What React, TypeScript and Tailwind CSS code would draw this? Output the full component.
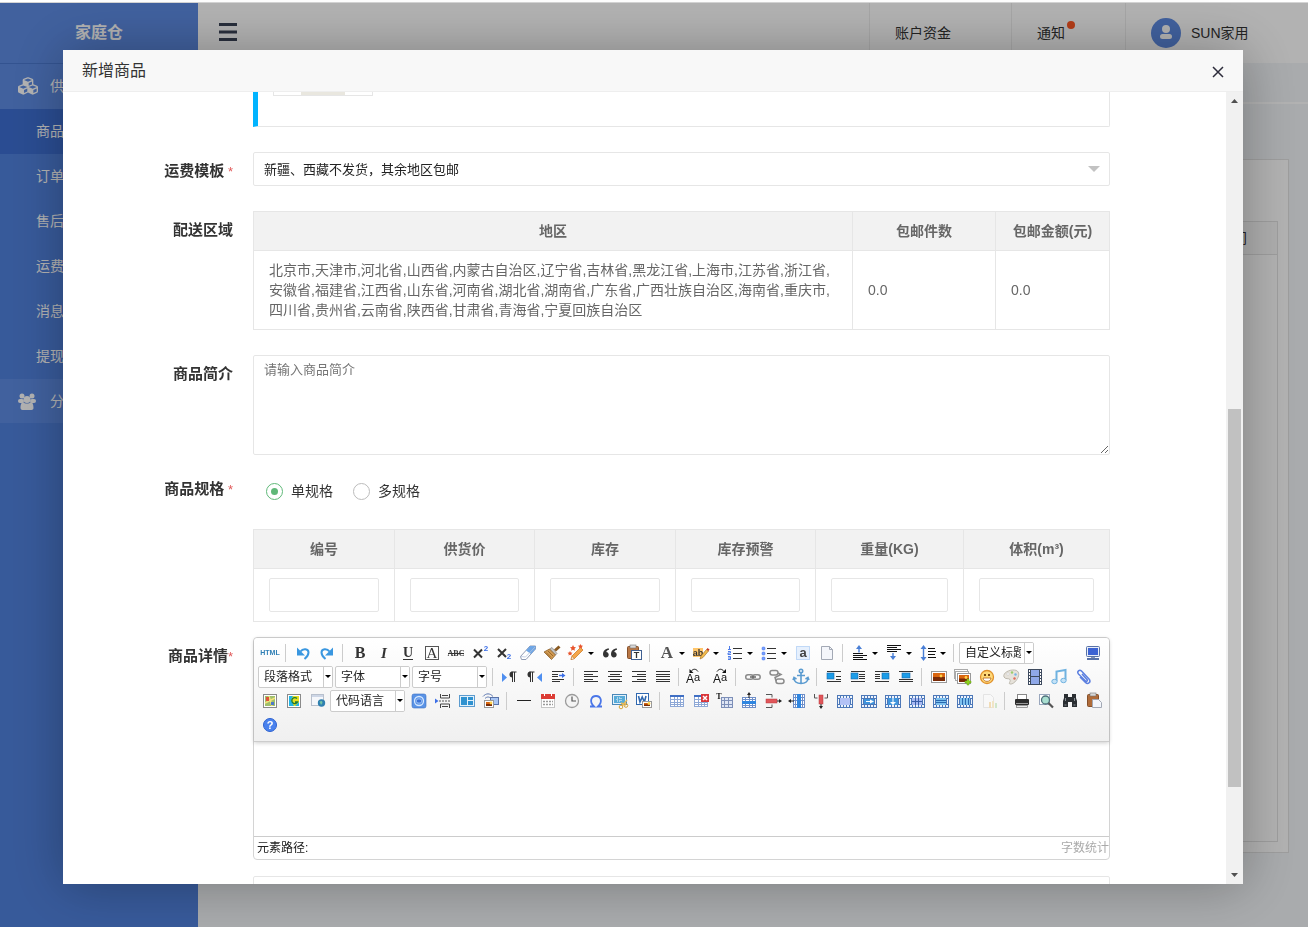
import { useState } from 'react';
import type { ReactNode } from 'react';
import { FaCubes } from 'react-icons/fa';

const INK = '#333333';
const BLUE = '#4a7fd6';

/* ---------- icon helpers (all toolbar icons live on a 20x20 grid) ---------- */

function Lines({ rows, color = INK }: { rows: number[][]; color?: string }) {
  return (
    <>
      {rows.map(([x, y, w], i) => (
        <rect key={i} x={x} y={y} width={w} height="1" fill={color} />
      ))}
    </>
  );
}

function Grid({
  x = 3,
  y = 4,
  w = 14,
  h = 12,
  cols = [] as number[],
  rows = [] as number[],
  fill = '#ffffff',
  stroke = '#6f8fc9',
}) {
  return (
    <>
      <rect x={x + 0.5} y={y + 0.5} width={w - 1} height={h - 1} fill={fill} stroke={stroke} />
      {cols.map((c) => (
        <rect key={'c' + c} x={c} y={y} width="1" height={h} fill={stroke} />
      ))}
      {rows.map((r) => (
        <rect key={'r' + r} x={x} y={r} width={w} height="1" fill={stroke} />
      ))}
    </>
  );
}

function Glyph({
  x = 10,
  y = 15,
  size,
  children,
  fill = INK,
  serif,
  bold,
  italic,
}: {
  x?: number;
  y?: number;
  size: number;
  children: string;
  fill?: string;
  serif?: boolean;
  bold?: boolean;
  italic?: boolean;
}) {
  return (
    <text
      x={x}
      y={y}
      fontSize={size}
      fill={fill}
      textAnchor="middle"
      fontFamily={serif ? 'Liberation Serif, serif' : 'Liberation Sans, sans-serif'}
      fontWeight={bold ? 700 : 400}
      fontStyle={italic ? 'italic' : 'normal'}
    >
      {children}
    </text>
  );
}

function Photo({ x, y, w = 14, h = 11 }: { x: number; y: number; w?: number; h?: number }) {
  return (
    <>
      <rect x={x + 0.5} y={y + 0.5} width={w - 1} height={h - 1} fill="#fff" stroke="#999" />
      <rect x={x + 2} y={y + 2} width={w - 4} height={h - 4} fill="#7a2b06" />
      <rect x={x + 2} y={y + 2} width={w - 4} height={(h - 4) / 2} fill="#d9650f" />
      <circle cx={x + w / 2 + 2} cy={y + h / 2 - 1} r="1.4" fill="#ffd24a" />
    </>
  );
}

const star = '#e8552d';
const omegaBlue = '#3a6ee8';

const filmFrame = (
  <>
    <rect x="2" y="4" width="16" height="13" fill="#4d78b8" />
    {[3, 6, 9, 12, 15].map((v) => (
      <g key={v} fill="#eef4fc">
        <rect x={v} y="5" width="2" height="2" />
        <rect x={v} y="14" width="2" height="2" />
      </g>
    ))}
    <rect x="3" y="8" width="1" height="5" fill="#eef4fc" />
    <rect x="16" y="8" width="1" height="5" fill="#eef4fc" />
  </>
);

const icons: Record<string, ReactNode> = {
  html: <Glyph size={7} y={12} fill="#2f7fb5" bold>HTML</Glyph>,
  undo: (
    <>
      <path d="M4 4.500v8h8z" fill="#3a97e0" />
      <path d="M7.500 8.500c2.500-3.500 8-3 8 1 0 2.500-1.500 4.500-4 6.500" fill="none" stroke="#3a97e0" strokeWidth="2" />
    </>
  ),
  redo: (
    <>
      <path d="M16 4.500v8H8z" fill="#3a97e0" />
      <path d="M12.500 8.500c-2.500-3.500-8-3-8 1 0 2.500 1.500 4.500 4 6.500" fill="none" stroke="#3a97e0" strokeWidth="2" />
    </>
  ),
  bold: <Glyph size={16} serif bold>B</Glyph>,
  italic: <Glyph size={15} serif bold italic>I</Glyph>,
  underline: (
    <>
      <Glyph size={14} y={14} serif bold>U</Glyph>
      <Lines rows={[[5, 16, 10]]} />
    </>
  ),
  fontborder: (
    <>
      <rect x="3.5" y="3.5" width="13" height="13" fill="none" stroke="#555" />
      <Glyph size={15} y={15} serif>A</Glyph>
    </>
  ),
  strikethrough: (
    <>
      <Glyph size={8} y={13} serif bold>ABC</Glyph>
      <Lines rows={[[2, 10, 16]]} />
    </>
  ),
  superscript: (
    <>
      <path d="M4 6.500l8 8M12 6.500l-8 8" stroke={INK} strokeWidth="2" />
      <Glyph size={8} x={16} y={8} fill={omegaBlue} bold>2</Glyph>
    </>
  ),
  subscript: (
    <>
      <path d="M4 6l8 8M12 6l-8 8" stroke={INK} strokeWidth="2" />
      <Glyph size={8} x={15} y={16} fill={omegaBlue} bold>2</Glyph>
    </>
  ),
  removeformat: (
    <>
      <path d="M2.500 13.500l9.500-10.500h5.500v3l-9.500 10.500H3.500z" fill="#fff" stroke="#8f9bb3" />
      <path d="M12 3h5.500v3l-4.500 5-5-3.500z" fill="#6ea6e6" />
      <path d="M3 13.500l4.500.5 9.500-10" fill="none" stroke="#b5c3dc" strokeWidth=".8" />
    </>
  ),
  formatmatch: (
    <>
      <path d="M17.500 3.500l-4.500 4" stroke="#8a5a22" strokeWidth="3" />
      <path d="M10 4.500l5 6-1.500 1.500-6-6z" fill="#c4c4c4" stroke="#777" strokeWidth=".6" />
      <path d="M7.500 6l6 6-4 4.500-7.500-7.500z" fill="#d09a52" stroke="#80521b" strokeWidth=".7" />
      <path d="M4 9.500l5 5M6 8l5 5" stroke="#8d5c20" strokeWidth=".8" />
    </>
  ),
  autotypeset: (
    <>
      <path d="M5 16.500l1-3.500 8.500-8.500L17 7l-8.500 8.500z" fill="#f5a64a" stroke="#c5761d" strokeWidth=".7" />
      <path d="M5 16.500l1-3 2.200 2.200z" fill="#fff" stroke="#b5651b" strokeWidth=".5" />
      <path d="M7 2l1 2 2 .3-1.500 1.400.4 2L7 6.700l-1.900 1 .4-2L4 4.300 6 4zM14.500 1l.8 1.500 1.700.2-1.200 1.200.3 1.600-1.600-.8-1.500.8.3-1.600L12 2.700l1.700-.2zM4 8l.8 1.500 1.700.2-1.200 1.200.3 1.600L4 11.700l-1.500.8.3-1.600-1.300-1.200 1.700-.2z" fill={star} />
    </>
  ),
  blockquote: (
    <path d="M9 5.500C5 5.500 3 8 3 11.300c0 2 1.200 3.200 2.900 3.200 1.600 0 2.800-1.100 2.800-2.700 0-1.500-1.100-2.600-2.500-2.700C6.700 7.500 7.500 7 9 6.700zM17 5.500c-4 0-6 2.500-6 5.800 0 2 1.200 3.200 2.900 3.200 1.600 0 2.800-1.100 2.800-2.700 0-1.500-1.100-2.600-2.500-2.700.5-1.600 1.300-2.100 2.800-2.400z" fill={INK} />
  ),
  pasteplain: (
    <>
      <rect x="3.5" y="3.5" width="11" height="12" rx="1" fill="#b97745" stroke="#85502a" />
      <rect x="6" y="2" width="6" height="3" fill="#d9d9d9" stroke="#777" strokeWidth=".6" />
      <rect x="7.5" y="7.5" width="10" height="9" fill="#fff" stroke="#3f5f92" />
      <Glyph size={9} x={12.5} y={15} bold>T</Glyph>
    </>
  ),
  forecolor: <Glyph size={17} x={10} y={15} serif bold fill="#555">A</Glyph>,
  backcolor: (
    <>
      <rect x="2" y="5" width="10" height="9" fill="#ffc66b" />
      <Glyph size={9} x={7} y={13} bold>ab</Glyph>
      <path d="M9 16l1-3 5.500-6.500 2 1.500-5.500 6.500z" fill="#f4bd4c" stroke="#a8742a" strokeWidth=".7" />
      <path d="M15.500 6.500l1-1.500 2 1.500-1 1.500z" fill="#c9341f" />
    </>
  ),
  orderedlist: (
    <>
      <Lines rows={[[8, 5, 9], [8, 10, 9], [8, 15, 9]]} />
      <path d="M4.500 3v3M3 6.500h3M3 8.500h2.500v1.500H3v1.500h3M3 13.500h2.500v3H3M3 15h2.500" fill="none" stroke={omegaBlue} strokeWidth=".9" />
    </>
  ),
  unorderedlist: (
    <>
      <Lines rows={[[8, 5, 9], [8, 10, 9], [8, 15, 9]]} />
      {[5, 10, 15].map((y) => (
        <rect key={y} x="3" y={y - 1} width="3" height="3" rx="1" fill="#7aa0ff" stroke={omegaBlue} strokeWidth=".5" />
      ))}
    </>
  ),
  selectall: (
    <>
      <rect x="3.5" y="3.5" width="13" height="13" fill="#e6f0fd" stroke="#8fbaf0" strokeDasharray="1 1" />
      <Glyph size={13} y={14} bold fill="#444">a</Glyph>
    </>
  ),
  cleardoc: (
    <>
      <path d="M4.500 3.500h8l3 3v10h-11z" fill="#f4f6fb" stroke="#a3a9b5" />
      <path d="M12.500 3.500v3h3" fill="none" stroke="#a3a9b5" />
    </>
  ),
  paraabove: (
    <>
      <path d="M9 2l3 4H9.700v3.500H8.300V6H6z" fill={BLUE} />
      <Lines rows={[[3, 10, 10], [3, 12, 14], [3, 14, 10], [3, 16, 14]]} color="#111" />
    </>
  ),
  parabelow: (
    <>
      <Lines rows={[[3, 2, 14], [3, 4, 10], [3, 6, 14], [3, 8, 10]]} color="#111" />
      <path d="M9 17l3-4H9.700v-3H8.300v3H6z" fill={BLUE} />
    </>
  ),
  lineheight: (
    <>
      <path d="M5.500 2l3 4H6.200v8h2.300l-3 4-3-4h2.300V6H2.500z" fill={BLUE} />
      <Lines rows={[[10, 5, 7], [10, 8, 8], [10, 11, 7], [10, 14, 8]]} color="#111" />
    </>
  ),
  fullscreen: (
    <>
      <rect x="3.5" y="3.5" width="13" height="10" rx="1" fill="#e8edf7" stroke="#5872a8" />
      <rect x="5" y="5" width="10" height="7" fill="#3c63d3" />
      <rect x="8" y="14" width="4" height="1" fill="#8796b5" />
      <rect x="4.5" y="15.5" width="11" height="1" fill="#fff" stroke="#5872a8" />
    </>
  ),
  ltr: (
    <>
      <path d="M2 6l5 4.500L2 15z" fill="#4f8ff0" />
      <path d="M11.500 5h5M12.500 5v10M14.500 5v10" stroke={INK} strokeWidth="1" />
      <path d="M12.500 4.500a3 3 0 000 6z" fill={INK} />
    </>
  ),
  rtl: (
    <>
      <path d="M18 6l-5 4.500 5 4.500z" fill="#4f8ff0" />
      <path d="M5.500 5h5M6.500 5v10M8.500 5v10" stroke={INK} strokeWidth="1" />
      <path d="M6.500 4.500a3 3 0 000 6z" fill={INK} />
    </>
  ),
  indent: (
    <>
      <Lines rows={[[4, 4, 12], [4, 7, 6], [4, 9, 6], [4, 12, 12], [4, 14, 8]]} />
      <path d="M11 7.700h3V6l3.500 2.500L14 11V9.300h-3z" fill={omegaBlue} />
    </>
  ),
  alignleft: <Lines rows={[[3, 4, 14], [3, 7, 9], [3, 9, 14], [3, 12, 9], [3, 14, 14]]} />,
  aligncenter: <Lines rows={[[3, 4, 14], [5, 7, 10], [3, 9, 14], [5, 12, 10], [3, 14, 14]]} />,
  alignright: <Lines rows={[[3, 4, 14], [8, 7, 9], [3, 9, 14], [8, 12, 9], [3, 14, 14]]} />,
  alignjustify: <Lines rows={[[3, 4, 14], [3, 7, 14], [3, 9, 14], [3, 12, 14], [3, 14, 14]]} />,
  touppercase: (
    <>
      <Glyph size={12} x={4} y={16} fill="#111">A</Glyph>
      <Glyph size={11} x={11} y={14} fill="#111">a</Glyph>
      <path d="M5 4.500c2-3 5-3 7 0" fill="none" stroke="#111" />
      <path d="M3.500 2v4h4z" fill="#111" />
    </>
  ),
  tolowercase: (
    <>
      <Glyph size={12} x={7} y={16} fill="#111">A</Glyph>
      <Glyph size={11} x={14} y={14} fill="#111">a</Glyph>
      <path d="M7 4.500c2-3 5-3 7 0" fill="none" stroke="#111" />
      <path d="M16 2v4h-4z" fill="#111" />
    </>
  ),
  link: (
    <>
      <rect x="2.7" y="7.7" width="7.5" height="4.6" rx="2.3" fill="none" stroke="#8b8b8b" strokeWidth="1.5" />
      <rect x="9.7" y="7.7" width="7.5" height="4.6" rx="2.3" fill="none" stroke="#8b8b8b" strokeWidth="1.5" />
      <path d="M7 10h6" stroke="#666" strokeWidth="1.5" />
    </>
  ),
  unlink: (
    <g fill="none" stroke="#8b8b8b" strokeWidth="1.5">
      <rect x="3" y="3.5" width="8" height="4.5" rx="2.2" />
      <rect x="9" y="12" width="8" height="4.5" rx="2.2" />
      <path d="M11 6l3 1.500-6 3L9 14" />
    </g>
  ),
  anchor: (
    <g fill="none" stroke="#5b9bd0" strokeWidth="1.6">
      <circle cx="10" cy="4" r="1.7" />
      <path d="M10 6v11M6 8.500h8M3 11.500c.5 3.500 3 5 7 5s6.500-1.500 7-5M2 13l1-2.500 2.500 1.500M18 13l-1-2.500-2.500 1.500" />
    </g>
  ),
  imageleft: (
    <>
      <Lines rows={[[3, 4, 14], [12, 9, 5], [12, 12, 5], [3, 14, 14]]} />
      <rect x="3" y="6" width="7" height="6" fill="#1b9ce8" stroke="#1567a8" strokeWidth=".6" />
    </>
  ),
  imagenone: (
    <>
      <Lines rows={[[3, 4, 14], [11, 7, 6], [11, 9, 6], [11, 11, 6], [3, 14, 14]]} />
      <rect x="3" y="6" width="7" height="6" fill="#1b9ce8" stroke="#1567a8" strokeWidth=".6" />
    </>
  ),
  imageright: (
    <>
      <Lines rows={[[3, 4, 14], [3, 7, 5], [3, 9, 5], [3, 11, 5], [3, 14, 14]]} />
      <rect x="10" y="6" width="7" height="6" fill="#1b9ce8" stroke="#1567a8" strokeWidth=".6" />
    </>
  ),
  imagecenter: (
    <>
      <Lines rows={[[3, 4, 14], [3, 12, 14], [3, 14, 14]]} />
      <rect x="6" y="6" width="8" height="5" fill="#1b9ce8" stroke="#1567a8" strokeWidth=".6" />
    </>
  ),
  image: <Photo x={2} y={4} w={16} h={12} />,
  multiimage: (
    <>
      <rect x="1.5" y="2.5" width="13" height="9" fill="#fff" stroke="#aaa" />
      <rect x="2.5" y="4.5" width="13" height="9" fill="#fff" stroke="#aaa" />
      <Photo x={4} y={6} w={14} h={11} />
      <path d="M14 12h2v2h2v2h-2v2h-2v-2h-2v-2h2z" fill="#8fcf1f" stroke="#6ba510" strokeWidth=".5" />
    </>
  ),
  emotion: (
    <>
      <circle cx="10" cy="10" r="6.5" fill="#ffd978" stroke="#e0902a" strokeWidth="1.3" />
      <rect x="7" y="7" width="2" height="2" fill="#7a4a12" />
      <rect x="11" y="7" width="2" height="2" fill="#7a4a12" />
      <path d="M6 11h8c-.5 4.500-7.500 4.500-8 0z" fill="#fff" stroke="#b5651b" strokeWidth=".8" />
    </>
  ),
  scrawl: (
    <>
      <path d="M3 10c-1.500-4 5-7.500 10.500-7 5 .5 5 5 3 8.500-2 3.500-5 6-7.500 5.500-2-.5 1-2.500 0-4.500-1-1.500-5 0-6-2.500z" fill="#e6e2da" stroke="#b3ada1" strokeWidth=".8" />
      <circle cx="7" cy="7" r="1.3" fill="#f7f7f7" stroke="#bbb" strokeWidth=".4" />
      <circle cx="11" cy="5.5" r="1.2" fill="#9acd6b" />
      <circle cx="14.5" cy="7.5" r="1.2" fill="#76b5e8" />
      <circle cx="13.5" cy="11.5" r="1.2" fill="#e06a5b" />
    </>
  ),
  video: (
    <>
      <rect x="3" y="2" width="14" height="16" fill="#3d4a5e" />
      <rect x="6" y="3" width="8" height="6" fill="#8fa8e8" />
      <rect x="6" y="10" width="8" height="7" fill="#8fa8e8" />
      {[3, 6, 9, 12, 15].map((y) => (
        <g key={y} fill="#fff">
          <rect x="4" y={y} width="1" height="2" />
          <rect x="15" y={y} width="1" height="2" />
        </g>
      ))}
    </>
  ),
  music: (
    <>
      <path d="M7.500 14V4.500l9-1.500v10" fill="none" stroke="#6fb2e0" strokeWidth="2" />
      <ellipse cx="5.5" cy="14.5" rx="2.7" ry="2.2" fill="#c4e2f7" stroke="#6fb2e0" />
      <ellipse cx="14.5" cy="13.5" rx="2.7" ry="2.2" fill="#c4e2f7" stroke="#6fb2e0" />
    </>
  ),
  attachment: (
    <path d="M9 7l5 5.500c1 1.200-.3 2.500-1.500 1.500L5.500 7C3.500 4.700 6.500 2 8.500 4l7.500 8c2.500 3-1 6-3.500 3.500L7 10" fill="none" stroke="#5b7fe0" strokeWidth="1.5" />
  ),
  map: (
    <>
      <rect x="3.5" y="3.5" width="13" height="13" fill="#fff" stroke="#8a8a8a" />
      <rect x="5" y="5" width="10" height="10" fill="#9fbf6b" />
      <path d="M5 12l10-5M9 5l3 10" stroke="#f3e27a" strokeWidth="1.5" />
      <rect x="6" y="6" width="3" height="4" fill="#e0523a" />
      <rect x="11" y="11" width="3" height="3" fill="#4d78c9" />
    </>
  ),
  gmap: (
    <>
      <rect x="3.5" y="3.5" width="13" height="13" fill="#fff" stroke="#8a8a8a" />
      <rect x="5" y="5" width="10" height="10" fill="#e8e01f" />
      <path d="M5 5h4L7 9l3 6H5zM11 15l4-4v4z" fill="#1fb6e8" />
      <path d="M13 7.500a3 3 0 10.5 3.500H11" fill="none" stroke="#1d7a3a" strokeWidth="1.4" />
    </>
  ),
  insertframe: (
    <>
      <rect x="3.5" y="3.5" width="12" height="11" fill="#f5f7fb" stroke="#b8c0cd" />
      <rect x="4" y="4" width="11" height="2" fill="#cdd6e6" />
      <circle cx="13.5" cy="12" r="3.7" fill="#2f7fb0" />
      <path d="M11.500 10.500l2.500-.5.500 2-1.500 2z" fill="#74c4a4" />
    </>
  ),
  webapp: (
    <>
      <rect x="3" y="3" width="14" height="14" rx="2" fill="#5a93e6" stroke="#3a6fc4" strokeWidth=".6" />
      <circle cx="10" cy="10" r="4.5" fill="none" stroke="#d6e8ff" strokeWidth="1.3" />
      <rect x="7.5" y="8" width="5" height="4" rx="1.5" fill="#3a72d6" stroke="#bcd6fb" strokeWidth=".7" />
    </>
  ),
  pagebreak: (
    <>
      <path d="M7.500 3v4h9V3M7.500 17v-4h9v4M9 4.500h6M9 15.500h6" fill="none" stroke="#444" />
      <path d="M6 10h12" stroke="#555" strokeDasharray="2 1" />
      <path d="M2 7.500l3.500 2.500L2 12.500z" fill={omegaBlue} />
    </>
  ),
  template: (
    <>
      <rect x="2.5" y="4.5" width="15" height="11" fill="#e3f1fb" stroke="#5b9bcf" />
      <rect x="4" y="6" width="6" height="8" fill="#2f92d0" />
      <rect x="11" y="6" width="5" height="3" fill="#2f92d0" />
      <rect x="11" y="10" width="5" height="4" fill="#2f92d0" />
    </>
  ),
  background: (
    <>
      <path d="M2 5.500c3-3.500 7-3.500 10 0M4 7.500c2-2 4-2 6 0" fill="none" stroke="#5b76b0" />
      <rect x="9.5" y="6.5" width="8" height="7" fill="#a9c6f5" stroke="#5872a8" />
      <Photo x={3} y={9} w={10} h={8} />
    </>
  ),
  horizontal: <Lines rows={[[3, 9, 14]]} color="#222" />,
  date: (
    <>
      <rect x="3.5" y="4.5" width="13" height="12" fill="#fff" stroke="#c5c5c5" />
      <rect x="3" y="3" width="14" height="5" fill="#dc3c35" />
      <rect x="6" y="2" width="1" height="3" fill="#fff" />
      <rect x="13" y="2" width="1" height="3" fill="#fff" />
      <path d="M5 10.500h10M5 13.500h10" stroke="#9a9a9a" strokeDasharray="2 1" strokeWidth="1.5" />
    </>
  ),
  time: (
    <>
      <circle cx="10" cy="10" r="6.5" fill="#f4f4f4" stroke="#9b9b9b" strokeWidth="1.3" />
      <path d="M10 5.500V10h4" fill="none" stroke="#555" strokeWidth="1.2" />
    </>
  ),
  spechars: <path d="M4 15.500h4c-5-4.500-3-10.500 2-10.500s7 6 2 10.500h4" fill="none" stroke="#4a76e8" strokeWidth="1.8" />,
  snapscreen: (
    <>
      <rect x="2.5" y="3.5" width="14" height="10" fill="#e4f1fb" stroke="#4a88b8" />
      <rect x="4" y="5" width="11" height="7" fill="#57abd8" />
      <path d="M7 7h4v3H7z" fill="none" stroke="#fff" strokeDasharray="1 1" />
      <path d="M17 9l-5 6M11 12l5 2" stroke="#e3b95a" strokeWidth="1.5" />
      <circle cx="11" cy="16" r="1.8" fill="none" stroke="#d5a53b" />
      <circle cx="16" cy="14.5" r="1.8" fill="none" stroke="#d5a53b" />
    </>
  ),
  wordimage: (
    <>
      <rect x="2.5" y="2.5" width="12" height="11" fill="#fff" stroke="#2f68b0" />
      <path d="M4.500 5l1.500 6 2.200-5 2.200 5L12 5" fill="none" stroke="#2f68b0" strokeWidth="1.6" />
      <Photo x={8} y={10} w={10} h={7} />
    </>
  ),
  inserttable: (
    <>
      <Grid cols={[7, 10, 13]} rows={[8, 11, 13]} stroke="#8ea8d6" />
      <rect x="3" y="4" width="14" height="2" fill="#3f6fc4" />
    </>
  ),
  deletetable: (
    <>
      <Grid cols={[7, 10, 13]} rows={[8, 11, 13]} stroke="#8ea8d6" />
      <rect x="3" y="4" width="14" height="2" fill="#3f6fc4" />
      <rect x="10" y="3" width="8" height="8" fill="#d9363a" />
      <path d="M12 5l4 4M16 5l-4 4" stroke="#fff" strokeWidth="1.5" />
    </>
  ),
  parabefore: (
    <>
      <Glyph size={8} x={4} y={8} bold serif fill="#111">T</Glyph>
      <Grid x={6} y={6} w={12} h={11} cols={[9, 13]} rows={[9, 13]} stroke="#7d8fb8" fill="#dfe6f5" />
    </>
  ),
  insertrow: (
    <>
      <Grid y={6} h={11} cols={[6, 10, 13]} rows={[8, 14]} />
      <rect x="3" y="10" width="14" height="3" fill="#2f86e0" />
      <path d="M10 1l2 3H8zM9.500 3h1v4h-1z" fill="#222" />
    </>
  ),
  deleterow: (
    <>
      <path d="M3 3.500h6v3M3 16.500h6v-3" fill="none" stroke="#555" />
      <rect x="3" y="8" width="11" height="4" fill="#e0565a" stroke="#b83a3f" strokeWidth=".5" />
      <path d="M14 9.500h2V8l3 2-3 2v-1.500h-2z" fill="#222" />
    </>
  ),
  insertcol: (
    <>
      <Grid x={6} w={12} y={3} h={14} cols={[8, 15]} rows={[6, 9, 13]} />
      <rect x="10" y="3" width="4" height="14" fill="#2f86e0" />
      <path d="M1 10l3-2v1.500h3v1H4V12z" fill="#222" />
    </>
  ),
  deletecol: (
    <>
      <path d="M3.500 3v4h3M16.500 3v4h-3" fill="none" stroke="#555" />
      <rect x="8" y="4" width="4" height="9" fill="#e0565a" stroke="#b83a3f" strokeWidth=".5" />
      <path d="M9.500 13h1v2h1.500L10 18l-2-3h1.500z" fill="#222" />
    </>
  ),
  mergecells: (
    <>
      {filmFrame}
      <rect x="5" y="7" width="10" height="7" fill="#b3c2f5" />
    </>
  ),
  mergeright: (
    <>
      {filmFrame}
      <rect x="5" y="8" width="10" height="5" fill="#3f94dc" />
      <path d="M7 10h4V8.500l4 2-4 2V11H7z" fill="#fff" />
    </>
  ),
  mergedown: (
    <>
      {filmFrame}
      <rect x="5" y="7" width="10" height="7" fill="#3f94dc" />
      <path d="M9.500 7h1v4H13l-3 3-3-3h2.500z" fill="#fff" />
    </>
  ),
  splittocells: (
    <>
      {filmFrame}
      <rect x="5" y="7" width="10" height="7" fill="#a8b9f2" />
      <path d="M5 10.500h10M8.500 7v7M11.500 7v7" stroke="#3a5fa8" />
    </>
  ),
  splittorows: (
    <>
      {filmFrame}
      <rect x="5" y="7" width="10" height="7" fill="#7cc0ee" />
      <path d="M5 9.500h10M5 11.500h10" stroke="#2a69b0" />
    </>
  ),
  splittocols: (
    <>
      {filmFrame}
      <rect x="5" y="7" width="10" height="7" fill="#7cc0ee" />
      <path d="M7.500 7v7M10.500 7v7M13.500 7v7" stroke="#2a69b0" />
    </>
  ),
  charts: (
    <g opacity=".3">
      <path d="M4.500 3.500h7l3 3v10h-10z" fill="#fff" stroke="#bbb" />
      <rect x="10" y="11" width="2" height="6" fill="#e8a52a" />
      <rect x="13" y="10" width="2" height="7" fill="#e8c05a" />
      <rect x="16" y="12" width="2" height="5" fill="#7fc46b" />
    </g>
  ),
  print: (
    <>
      <rect x="5.5" y="3.5" width="9" height="5" fill="#fff" stroke="#888" />
      <rect x="3" y="8" width="14" height="6" rx="1" fill="#2c2c2c" />
      <rect x="4" y="12" width="12" height="1" fill="#999" />
      <rect x="4.5" y="14.5" width="11" height="2" fill="#eee" stroke="#777" strokeWidth=".7" />
    </>
  ),
  preview: (
    <>
      <rect x="3.5" y="3.5" width="10" height="10" fill="#fff" stroke="#9aa7bd" />
      <circle cx="9.5" cy="9" r="4" fill="#a9dfd0" stroke="#4d6f7a" strokeWidth="1.3" />
      <path d="M12.500 12l4.500 4.500" stroke="#555" strokeWidth="2.2" />
    </>
  ),
  searchreplace: (
    <>
      <path d="M4 3h4v3h4V3h4v4l1 3v6h-5v-5H8v5H3v-6l1-3z" fill="#2b2f33" />
      <path d="M5.500 7v3M14.500 7v3M4.500 14h2M13.500 14h2" stroke="#8a9196" />
    </>
  ),
  drafts: (
    <>
      <rect x="3.5" y="3.5" width="11" height="12" rx="1" fill="#b06c3a" stroke="#85502a" />
      <rect x="6" y="2" width="6" height="3" fill="#d9d9d9" stroke="#777" strokeWidth=".6" />
      <path d="M8.500 8.500h6l3 3v5h-9z" fill="#f4f6fb" stroke="#a3a9b5" />
    </>
  ),
  help: (
    <>
      <circle cx="10" cy="10" r="6.5" fill="#4a82ee" stroke="#2d62d0" />
      <Glyph size={11} y={14} bold fill="#fff">?</Glyph>
    </>
  ),
};

/* ---------- editor toolbar ---------- */

// "|" separator, trailing "+" = button with a drop-down arrow, "=" prefix = combo box
const toolbarRows = [
  'html | undo redo | bold italic underline fontborder strikethrough superscript subscript removeformat formatmatch autotypeset+ blockquote pasteplain | forecolor+ backcolor+ orderedlist+ unorderedlist+ selectall cleardoc | paraabove+ parabelow+ lineheight+ | =自定义标题',
  '=段落格式 =字体 =字号 | ltr rtl indent | alignleft aligncenter alignright alignjustify | touppercase tolowercase | link unlink anchor | imageleft imagenone imageright imagecenter | image multiimage emotion scrawl video music attachment',
  'map gmap insertframe =代码语言 webapp pagebreak template background | horizontal date time spechars snapscreen wordimage | inserttable deletetable parabefore insertrow deleterow insertcol deletecol mergecells mergeright mergedown splittocells splittorows splittocols charts | print preview searchreplace drafts',
  'help',
];

function ToolButton({ name, split }: { name: string; split?: boolean }) {
  return (
    <button
      type="button"
      aria-label={name}
      className={`flex h-5 shrink-0 items-center mx-0.5 ${split ? 'w-[30px]' : 'w-5'}`}
    >
      <svg viewBox="0 0 20 20" className="size-5 shrink-0 overflow-visible">
        {icons[name]}
      </svg>
      {split && (
        <svg viewBox="0 0 10 20" className="h-5 w-[10px] shrink-0">
          <path d="M2 9h6L5 12z" fill="#000" />
        </svg>
      )}
    </button>
  );
}

function Combo({ label }: { label: string }) {
  return (
    <span className="relative mr-0.5 flex h-[22px] w-[75px] shrink-0 overflow-hidden rounded-xs border border-[#ccc] bg-white">
      <select
        aria-label={label}
        className="w-[61px] appearance-none overflow-hidden whitespace-nowrap pl-[5px] text-xs text-[#222] outline-none"
      >
        <option>{label}</option>
      </select>
      <span className="pointer-events-none absolute inset-y-0 right-0 flex w-[9px] items-center justify-center border-l border-[#ccc] bg-white">
        <svg viewBox="0 0 6 4" className="h-1 w-1.5">
          <path d="M0 0h6L3 3z" fill="#000" />
        </svg>
      </span>
    </span>
  );
}

function Toolbar() {
  return (
    <div className="relative rounded-t border-b border-[#ccc] bg-gradient-to-b from-white to-[#f0f0f0] px-1 pt-[3px] pb-1 shadow-[0_1px_4px_rgba(0,0,0,0.2)]">
      {toolbarRows.map((row, i) => (
        <div key={i} className="flex h-6 items-center">
          {row.split(' ').map((item, k) => {
            if (item === '|') {
              return <span key={k} className="ml-[3px] mr-[5px] h-[18px] w-px shrink-0 bg-[#ccc]" />;
            }
            if (item.startsWith('=')) return <Combo key={k} label={item.slice(1)} />;
            return <ToolButton key={k} name={item.replace('+', '')} split={item.endsWith('+')} />;
          })}
          {i === 0 && (
            <span className="ml-auto">
              <ToolButton name="fullscreen" />
            </span>
          )}
        </div>
      ))}
    </div>
  );
}

/* ---------- form ---------- */

function FormItem({
  label,
  required,
  htmlFor,
  className = 'mb-[25px]',
  children,
}: {
  label?: ReactNode;
  required?: boolean;
  htmlFor?: string;
  className?: string;
  children: ReactNode;
}) {
  return (
    <div className={`flex gap-5 ${className}`}>
      <label htmlFor={htmlFor} className="w-[170px] shrink-0 pt-[9px] text-right text-[15px] leading-5 font-bold text-[#333]">
        {label}
        {required && <span className="text-[13px] font-normal text-[#e05a5a]"> *</span>}
      </label>
      <div className="min-w-0 flex-1">{children}</div>
    </div>
  );
}

const specColumns = [
  { title: '编号', width: 'w-[141px]' },
  { title: '供货价', width: 'w-[140px]' },
  { title: '库存', width: 'w-[141px]' },
  { title: '库存预警', width: 'w-[140px]' },
  { title: '重量(KG)', width: 'w-[148px]' },
  { title: '体积(m³)', width: 'w-[146px]' },
];

const th = 'h-[39px] border border-[#e6e6e6] bg-[#f2f2f2] px-[15px] text-center font-bold';

function ProductForm() {
  const [spec, setSpec] = useState('单规格');

  return (
    <form className="pr-[116px]">
      <FormItem>
        <div className="h-[35px] rounded-br-xs border-r border-b border-l-[5px] border-[#e6e6e6] border-l-[#01b4ff] pl-[15px]">
          <div className="flex h-1 w-[100px] justify-center border-x border-b border-[#e6e6e6]">
            <span className="h-[3px] w-11 bg-[#e9e7df]" />
          </div>
        </div>
      </FormItem>

      <FormItem label="运费模板" required htmlFor="freight">
        <div className="relative">
          <select
            id="freight"
            className="block h-[34px] w-full appearance-none rounded-xs border border-[#e6e6e6] bg-white pt-0.5 pl-2.5 text-[13px] text-[#222] outline-none"
          >
            <option>新疆、西藏不发货，其余地区包邮</option>
          </select>
          <svg viewBox="0 0 12 6" className="pointer-events-none absolute top-3.5 right-2.5 h-1.5 w-3">
            <path d="M0 0h12L6 6z" fill="#c2c2c2" />
          </svg>
        </div>
      </FormItem>

      <FormItem label="配送区域">
        <table className="w-full table-fixed border-collapse text-sm leading-5 text-[#666]">
          <thead>
            <tr>
              <th className={th}>地区</th>
              <th className={`w-[143px] ${th}`}>包邮件数</th>
              <th className={`w-[114px] ${th}`}>包邮金额(元)</th>
            </tr>
          </thead>
          <tbody>
            <tr>
              <td className="border border-[#e6e6e6] px-[15px] py-[9px]">
                北京市,天津市,河北省,山西省,内蒙古自治区,辽宁省,吉林省,黑龙江省,上海市,江苏省,浙江省,
                安徽省,福建省,江西省,山东省,河南省,湖北省,湖南省,广东省,广西壮族自治区,海南省,重庆市,
                四川省,贵州省,云南省,陕西省,甘肃省,青海省,宁夏回族自治区
              </td>
              <td className="border border-[#e6e6e6] px-[15px]">0.0</td>
              <td className="border border-[#e6e6e6] px-[15px]">0.0</td>
            </tr>
          </tbody>
        </table>
      </FormItem>

      <FormItem label="商品简介" htmlFor="intro" className="mb-[15px]">
        <textarea
          id="intro"
          placeholder="请输入商品简介"
          className="block h-[100px] w-full rounded-xs border border-[#e6e6e6] px-2.5 py-1 text-[13px] leading-5 outline-none placeholder:text-[#757575]"
        />
      </FormItem>

      <FormItem label="商品规格" required className="mb-[17px]">
        <div className="flex h-[42px] items-center gap-5 pl-[13px]">
          {['单规格', '多规格'].map((name) => (
            <label key={name} className="flex items-center gap-2 text-sm text-[#333]">
              <input
                type="radio"
                name="spec"
                checked={spec === name}
                onChange={() => setSpec(name)}
                className="flex size-[17px] appearance-none items-center justify-center rounded-full border border-[#bbb] checked:border-[#5fb878] checked:before:size-[7px] checked:before:rounded-full checked:before:bg-[#5fb878] checked:before:content-['']"
              />
              {name}
            </label>
          ))}
        </div>
      </FormItem>

      <FormItem className="mb-[15px]">
        <table className="w-full table-fixed border-collapse text-sm leading-5 text-[#666]">
          <thead>
            <tr>
              {specColumns.map((c) => (
                <th key={c.title} className={`${c.width} ${th}`}>
                  {c.title}
                </th>
              ))}
            </tr>
          </thead>
          <tbody>
            <tr>
              {specColumns.map((c) => (
                <td key={c.title} className="border border-[#e6e6e6] px-[15px] py-[9px]">
                  <input
                    type="text"
                    aria-label={c.title}
                    className="block h-[34px] w-full rounded-xs border border-[#e6e6e6] px-2.5 outline-none"
                  />
                </td>
              ))}
            </tr>
          </tbody>
        </table>
      </FormItem>

      <FormItem
        label={
          <>
            商品详情<span className="text-[13px] font-normal text-[#e05a5a]">*</span>
          </>
        }
        className="mb-4"
      >
        <div className="rounded border border-[#d4d4d4] bg-white">
          <Toolbar />
          <div className="h-[94px]" contentEditable suppressContentEditableWarning />
          <div className="flex h-[23px] items-center justify-between border-t border-[#ccc] pl-[3px] text-xs">
            <span className="text-[#222]">元素路径:</span>
            <span className="text-[#aaa]">字数统计</span>
          </div>
        </div>
      </FormItem>

      <FormItem>
        <div className="h-24 rounded-xs border border-[#e6e6e6]" />
      </FormItem>
    </form>
  );
}

/* ---------- page behind the dialog ---------- */

function UsersIcon() {
  return (
    <svg viewBox="0 0 18 17" className="h-[17px] w-[18px]" fill="currentColor">
      <circle cx="4" cy="3" r="2.5" />
      <circle cx="14" cy="3" r="2.5" />
      <rect x="0" y="6" width="6" height="4" rx="2" />
      <rect x="12" y="6" width="6" height="4" rx="2" />
      <circle cx="9" cy="6.5" r="3.5" />
      <path d="M5 9c2 2 6 2 8 0 2 .5 2.500 4 2.500 6 0 1.300-1 2-2 2h-9c-1 0-2-.7-2-2 0-2 .5-5.500 2.500-6z" />
    </svg>
  );
}

const menu = ['商品', '订单', '售后', '运费', '消息', '提现'];

function Sidebar() {
  return (
    <aside className="w-[198px] shrink-0 bg-[#5081dd] text-sm text-white">
      <div className="flex h-[61px] items-center justify-center border-b border-[#4a78cf] bg-[#5d8be3] text-base font-bold">
        家庭仓
      </div>
      <nav>
        <a href="#supply" className="flex h-[45px] items-center gap-3 bg-[#5d8be3] pb-0.5 pl-[18px]">
          <FaCubes className="size-5" />供
        </a>
        {menu.map((name, i) => (
          <a
            key={name}
            href={`#menu-${i}`}
            className={`flex h-[45px] items-center pb-0.5 pl-9 ${i === 0 ? 'bg-[#3d6ed1]' : ''}`}
          >
            {name}
          </a>
        ))}
        <a href="#share" className="flex h-11 items-center gap-3.5 bg-[#5d8be3] pl-[18px]">
          <UsersIcon />分
        </a>
      </nav>
    </aside>
  );
}

function Header() {
  return (
    <header className="flex h-[60px] items-stretch justify-between bg-white text-sm text-[#333]">
      <button type="button" aria-label="menu" className="flex w-[60px] items-center justify-center pb-0.5">
        <svg viewBox="0 0 18 18" className="size-[18px]">
          <path d="M0 1.500h18M0 9h18M0 16.500h18" stroke="#3a4256" strokeWidth="3" />
        </svg>
      </button>
      <div className="flex">
        <a href="#funds" className="flex w-[142px] items-center border-l border-[#eee] pl-[25px]">
          账户资金
        </a>
        <a href="#notice" className="flex w-[114px] items-center border-l border-[#eee] pl-[25px]">
          通知
          <span className="mb-4 ml-0.5 size-2 rounded-full bg-[#ff5722]" />
        </a>
        <a href="#user" className="flex w-[183px] items-center gap-2.5 border-l border-[#eee] pl-[25px]">
          <svg viewBox="0 0 30 30" className="size-[30px]">
            <circle cx="15" cy="15" r="15" fill="#5d8be3" />
            <circle cx="15" cy="11" r="4" fill="#fff" />
            <rect x="9" y="16" width="12" height="5" rx="2.5" fill="#fff" />
          </svg>
          SUN家用
        </a>
      </div>
    </header>
  );
}

export default function App() {
  return (
    <div className="flex min-h-screen flex-col bg-white font-['Liberation_Sans','Noto_Sans_CJK_SC',sans-serif]">
      <div className="h-[3px] border-b border-[#d4d4d4]" />
      <div className="flex flex-1">
        <Sidebar />
        <div className="flex flex-1 flex-col bg-[#f2f5f8]">
          <Header />
          <div className="h-[41px] border-b-2 border-white" />
          <div className="mx-[19px] mt-[55px] mb-[74px] flex flex-1 flex-col border border-[#e2e2e2] bg-white px-2.5 pt-[61px] pb-2.5">
            <div className="flex-1 border border-[#e2e2e2]">
              <div className="flex h-[33px] items-center justify-end border-b border-[#e2e2e2] bg-[#fafafa] pr-[30px] text-sm text-[#333]">
                间
              </div>
            </div>
          </div>
        </div>
      </div>

      <div className="fixed inset-x-0 top-[3px] bottom-0 flex bg-black/30 pt-[47px] pr-[65px] pb-[43px] pl-[63px]">
        <div
          role="dialog"
          aria-label="新增商品"
          className="flex min-w-0 flex-1 flex-col bg-white shadow-[1px_1px_50px_rgba(0,0,0,0.3)]"
        >
          <div className="flex h-[42px] shrink-0 items-center justify-between border-b border-[#eee] bg-[#f8f8f8] px-[19px]">
            <h2 className="text-base text-[#333]">新增商品</h2>
            <button type="button" aria-label="close" className="pt-0.5">
              <svg viewBox="0 0 12 12" className="size-3">
                <path d="M1 1l10 10M11 1L1 11" stroke="#2d2c3b" strokeWidth="1.5" />
              </svg>
            </button>
          </div>
          <div className="flex min-h-0 flex-1">
            <div className="min-w-0 flex-1 overflow-y-auto [scrollbar-width:none]">
              <ProductForm />
            </div>
            <div className="flex w-[17px] shrink-0 flex-col items-center bg-[#f1f1f1]">
              <svg viewBox="0 0 17 17" className="size-[17px]">
                <path d="M5 11h7L8.500 7z" fill="#505050" />
              </svg>
              <div className="flex-[300]" />
              <div className="w-[13px] flex-[378] bg-[#c1c1c1]" />
              <div className="flex-[80]" />
              <svg viewBox="0 0 17 17" className="size-[17px]">
                <path d="M5 6h7l-3.500 4z" fill="#505050" />
              </svg>
            </div>
          </div>
        </div>
      </div>
    </div>
  );
}
